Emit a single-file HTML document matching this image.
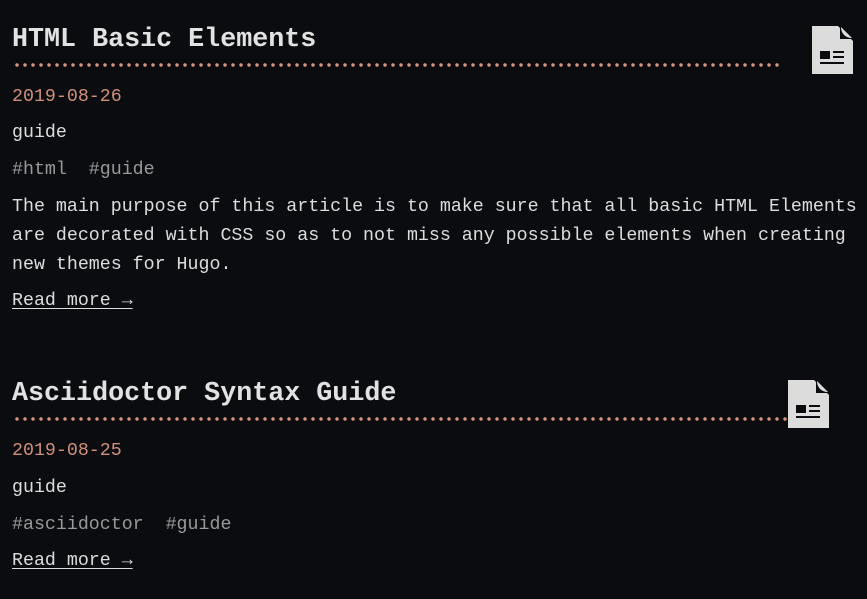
<!DOCTYPE html>
<html><head><style>
body{margin:0;background:#0b0c10;width:867px;height:599px;overflow:hidden;font-family:"Liberation Mono",monospace;color:#ddd;font-size:18.3px}
.a{position:absolute;white-space:pre;line-height:29px}
.t{font-weight:bold;font-size:26.7px;color:#e2e2e2;line-height:36px}
.d{color:#d0907a}
.g{color:#999}
.dots{position:absolute;height:4px;background-image:radial-gradient(circle at 2px 2px,#d8957e 1.5px,transparent 2px);background-size:8px 4px}
u{text-underline-offset:3px}
</style></head><body>
<div class="a t" style="left:12px;top:22px">HTML Basic Elements</div>
<div class="dots" style="left:15px;top:63px;width:768px"></div>
<svg style="position:absolute;left:812px;top:26px" width="41" height="48" viewBox="0 0 41 48"><path d="M0 0H26L41 15V48H0Z" fill="#dcdcdc"/><path d="M28 0L41 13H28Z" fill="#0b0c10"/><path d="M29 1L40 12C34 12 29 8 29 1Z" fill="#dcdcdc"/><rect x="8" y="25" width="10" height="8" fill="#0b0c10"/><rect x="21" y="25" width="11" height="2" fill="#0b0c10"/><rect x="21" y="30" width="11" height="2" fill="#0b0c10"/><rect x="8" y="36" width="24" height="2" fill="#0b0c10"/></svg>
<div class="a d" style="left:12px;top:83px">2019-08-26</div>
<div class="a" style="left:12px;top:119px">guide</div>
<div class="a g" style="left:12px;top:156px">#html  #guide</div>
<div class="a" style="left:12px;top:193px">The main purpose of this article is to make sure that all basic HTML Elements
are decorated with CSS so as to not miss any possible elements when creating
new themes for Hugo.</div>
<div class="a" style="left:12px;top:287px"><u>Read more →</u></div>

<div class="a t" style="left:12px;top:376px">Asciidoctor Syntax Guide</div>
<div class="dots" style="left:15px;top:417px;width:776px"></div>
<svg style="position:absolute;left:788px;top:380px" width="41" height="48" viewBox="0 0 41 48"><path d="M0 0H26L41 15V48H0Z" fill="#dcdcdc"/><path d="M28 0L41 13H28Z" fill="#0b0c10"/><path d="M29 1L40 12C34 12 29 8 29 1Z" fill="#dcdcdc"/><rect x="8" y="25" width="10" height="8" fill="#0b0c10"/><rect x="21" y="25" width="11" height="2" fill="#0b0c10"/><rect x="21" y="30" width="11" height="2" fill="#0b0c10"/><rect x="8" y="36" width="24" height="2" fill="#0b0c10"/></svg>
<div class="a d" style="left:12px;top:437px">2019-08-25</div>
<div class="a" style="left:12px;top:474px">guide</div>
<div class="a g" style="left:12px;top:511px">#asciidoctor  #guide</div>
<div class="a" style="left:12px;top:547px"><u>Read more →</u></div>
</body></html>
